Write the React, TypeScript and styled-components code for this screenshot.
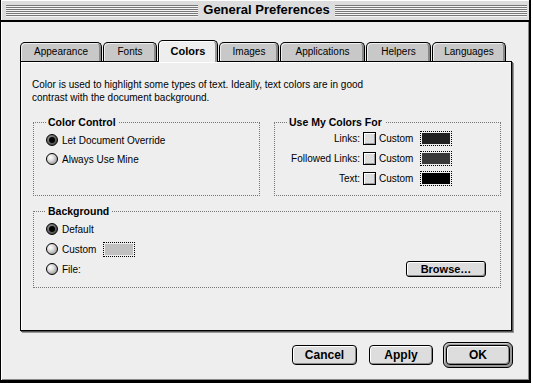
import styled, { createGlobalStyle, css } from "styled-components";

const GlobalStyle = createGlobalStyle`
  html, body {
    margin: 0;
    padding: 0;
    background: #ffffff;
  }
  body {
    font-family: "Liberation Sans", Arial, sans-serif;
    font-size: 10px;
    color: #000;
  }
`;

const tabs = [
  { label: "Appearance", width: 82 },
  { label: "Fonts", width: 54 },
  { label: "Colors", width: 60, active: true },
  { label: "Images", width: 60 },
  { label: "Applications", width: 85 },
  { label: "Helpers", width: 65 },
  { label: "Languages", width: 74 },
];

const colorRows = [
  { label: "Links:", color: "#222222" },
  { label: "Followed Links:", color: "#3a3a3a" },
  { label: "Text:", color: "#000000" },
];

function App() {
  return (
    <>
      <GlobalStyle />
      <Window>
        <TitleBar>
          <Stripes />
          <Title>General Preferences</Title>
          <Stripes />
        </TitleBar>
        <Body>
          <TabRow>
            {tabs.map((t) => (
              <Tab key={t.label} $width={t.width} $active={t.active}>
                {t.label}
              </Tab>
            ))}
          </TabRow>
          <Panel>
            <Intro>
              Color is used to highlight some types of text. Ideally, text colors are in good
              <br />
              contrast with the document background.
            </Intro>
            <GroupRow>
              <Group $height={80}>
                <Legend>Color Control</Legend>
                <Rows $gap={3} $top={3}>
                  <Row>
                    <Radio $checked />
                    <span>Let Document Override</span>
                  </Row>
                  <Row>
                    <Radio />
                    <span>Always Use Mine</span>
                  </Row>
                </Rows>
              </Group>
              <Group $height={80}>
                <Legend>Use My Colors For</Legend>
                <ColorGrid>
                  {colorRows.map((r) => (
                    <ColorRow key={r.label}>
                      <RowLabel>{r.label}</RowLabel>
                      <Checkbox />
                      <span>Custom</span>
                      <Swatch $color={r.color} />
                    </ColorRow>
                  ))}
                </ColorGrid>
              </Group>
            </GroupRow>
            <Group $height={83} $wide>
              <Legend>Background</Legend>
              <Rows $gap={4} $top={3}>
                <Row>
                  <Radio $checked />
                  <span>Default</span>
                </Row>
                <Row>
                  <Radio />
                  <span>Custom</span>
                  <Swatch $color="#c0c0c0" $gap={7} />
                </Row>
                <Row>
                  <Radio />
                  <span>File:</span>
                  <BrowseButton>Browse…</BrowseButton>
                </Row>
              </Rows>
            </Group>
          </Panel>
          <Footer>
            <PushButton $width={65}>Cancel</PushButton>
            <PushButton $width={64}>Apply</PushButton>
            <DefaultRing>
              <PushButton $width={64}>OK</PushButton>
            </DefaultRing>
          </Footer>
        </Body>
      </Window>
    </>
  );
}

export default App;

const Window = styled.div`
  width: 531px;
  height: 383px;
  box-sizing: border-box;
  border-left: 1px solid #000;
  border-right: 2px solid #000;
  border-bottom: 3px solid #000;
  background: #eeeeee;
  display: flex;
  flex-direction: column;
`;

const TitleBar = styled.div`
  height: 20px;
  display: flex;
  align-items: flex-start;
  padding: 0 2px 0 5px;
  background: #dddddd;
  border-bottom: 2px solid #000;
  box-shadow: inset 1px 1px 0 #ffffff;
`;

const Stripes = styled.div`
  flex: 1;
  height: 12px;
  margin-top: 5px;
  background: repeating-linear-gradient(
    to bottom,
    #777777 0 1px,
    #f4f4f4 1px 2px
  );
`;

const Title = styled.div`
  padding: 0 5px;
  font: bold 13px "Liberation Sans", Arial, sans-serif;
  line-height: 20px;
  white-space: nowrap;
`;

const Body = styled.div`
  flex: 1;
  padding: 18px 0 0 19px;
  box-shadow: inset 1px 0 0 #ffffff, inset -1px -1px 0 #888888;
`;

const TabRow = styled.div`
  display: flex;
  align-items: flex-end;
  gap: 1px;
  height: 21px;
  position: relative;
  z-index: 1;
`;

const Tab = styled.div<{ $width: number; $active?: boolean }>`
  width: ${(p) => p.$width}px;
  height: 19px;
  box-sizing: border-box;
  border: 1px solid #000;
  border-bottom: none;
  border-radius: 5px 5px 0 0;
  background: #c8c8c8;
  box-shadow: inset 1px 1px 0 #eeeeee, inset -2px 0 0 #888888;
  display: flex;
  align-items: center;
  justify-content: center;
  font-size: 10px;
  padding-bottom: 1px;
  ${(p) =>
    p.$active &&
    css`
      height: 22px;
      margin-bottom: -1px;
      background: #eeeeee;
      box-shadow: inset 1px 1px 0 #ffffff, inset -2px 0 0 #999999;
      font-weight: bold;
      font-size: 11px;
      padding-bottom: 2px;
    `}
`;

const Panel = styled.div`
  width: 492px;
  height: 270px;
  box-sizing: border-box;
  border: 1px solid #000;
  background: #eeeeee;
  box-shadow: inset 1px 1px 0 #ffffff, 1px 1px 0 #555555, 2px 2px 0 #999999;
  padding: 16px 10px 0 11px;
`;

const Intro = styled.p`
  margin: 0;
  line-height: 13px;
  font-size: 10px;
`;

const GroupRow = styled.div`
  display: grid;
  grid-template-columns: 227px 227px;
  column-gap: 14px;
  margin: 12px 0 0 1px;
`;

const Group = styled.fieldset<{ $height: number; $wide?: boolean }>`
  margin: 0;
  height: ${(p) => p.$height}px;
  box-sizing: border-box;
  border: 1px dotted #777777;
  padding: 0 14px 0 12px;
  min-width: 0;
  ${(p) =>
    p.$wide &&
    css`
      width: 468px;
      margin: 9px 0 0 1px;
    `}
`;

const Legend = styled.legend`
  padding: 0 3px 0 2px;
  font: bold 10.5px "Liberation Sans", Arial, sans-serif;
  line-height: 13px;
`;

const Rows = styled.div<{ $gap: number; $top: number }>`
  display: flex;
  flex-direction: column;
  gap: ${(p) => p.$gap}px;
  padding-top: ${(p) => p.$top}px;
`;

const Row = styled.div`
  display: flex;
  align-items: center;
  gap: 4px;
  height: 16px;
`;

const Radio = styled.span<{ $checked?: boolean }>`
  width: 12px;
  height: 12px;
  box-sizing: border-box;
  border-radius: 50%;
  border: 1px solid #000;
  flex-shrink: 0;
  position: relative;
  background: radial-gradient(circle at 35% 35%, #ffffff 0, #dddddd 35%, #8a8a8a 90%);
  ${(p) =>
    p.$checked &&
    css`
      background: radial-gradient(circle at 35% 35%, #999999 0, #444444 80%);
      &::after {
        content: "";
        position: absolute;
        inset: 2px;
        border-radius: 50%;
        background: #000;
      }
    `}
`;

const ColorGrid = styled.div`
  display: flex;
  flex-direction: column;
  gap: 4px;
  padding-top: 1px;
`;

const ColorRow = styled.div`
  display: grid;
  grid-template-columns: 73px 13px 38px 32px;
  column-gap: 3px;
  align-items: center;
  height: 16px;
`;

const RowLabel = styled.span`
  text-align: right;
  white-space: nowrap;
`;

const Checkbox = styled.span`
  width: 13px;
  height: 13px;
  box-sizing: border-box;
  border: 1px solid #000;
  background: #dddddd;
  box-shadow: inset 1px 1px 0 #ffffff, inset -1px -1px 0 #999999;
`;

const Swatch = styled.span<{ $color: string; $gap?: number }>`
  width: 32px;
  height: 15px;
  box-sizing: border-box;
  border: 1px dotted #000;
  padding: 1px;
  background: ${(p) => p.$color};
  background-clip: content-box;
  margin-left: ${(p) => (p.$gap ? p.$gap - 4 : 0)}px;
`;

const BrowseButton = styled.button`
  margin-left: auto;
  width: 80px;
  height: 16px;
  padding: 0;
  border: 1px solid #000;
  border-radius: 3px;
  background: #dddddd;
  box-shadow: inset 1px 1px 0 #ffffff, inset -1px -1px 0 #888888;
  font: bold 11px "Liberation Sans", Arial, sans-serif;
  color: #000;
`;

const Footer = styled.div`
  width: 493px;
  display: flex;
  justify-content: flex-end;
  align-items: center;
  gap: 12px;
  margin-top: 11px;
`;

const PushButton = styled.button<{ $width: number }>`
  width: ${(p) => p.$width}px;
  height: 20px;
  padding: 0;
  border: 1px solid #000;
  border-radius: 4px;
  background: #dddddd;
  box-shadow: inset 1px 1px 0 #ffffff, inset -1px -1px 0 #888888;
  font: bold 12px "Liberation Sans", Arial, sans-serif;
  color: #000;
`;

const DefaultRing = styled.div`
  display: flex;
  padding: 2px;
  margin-left: -2px;
  border: 1px solid #000;
  border-radius: 6px;
  background: #999999;
  box-shadow: inset 1px 1px 0 #cccccc;
`;
